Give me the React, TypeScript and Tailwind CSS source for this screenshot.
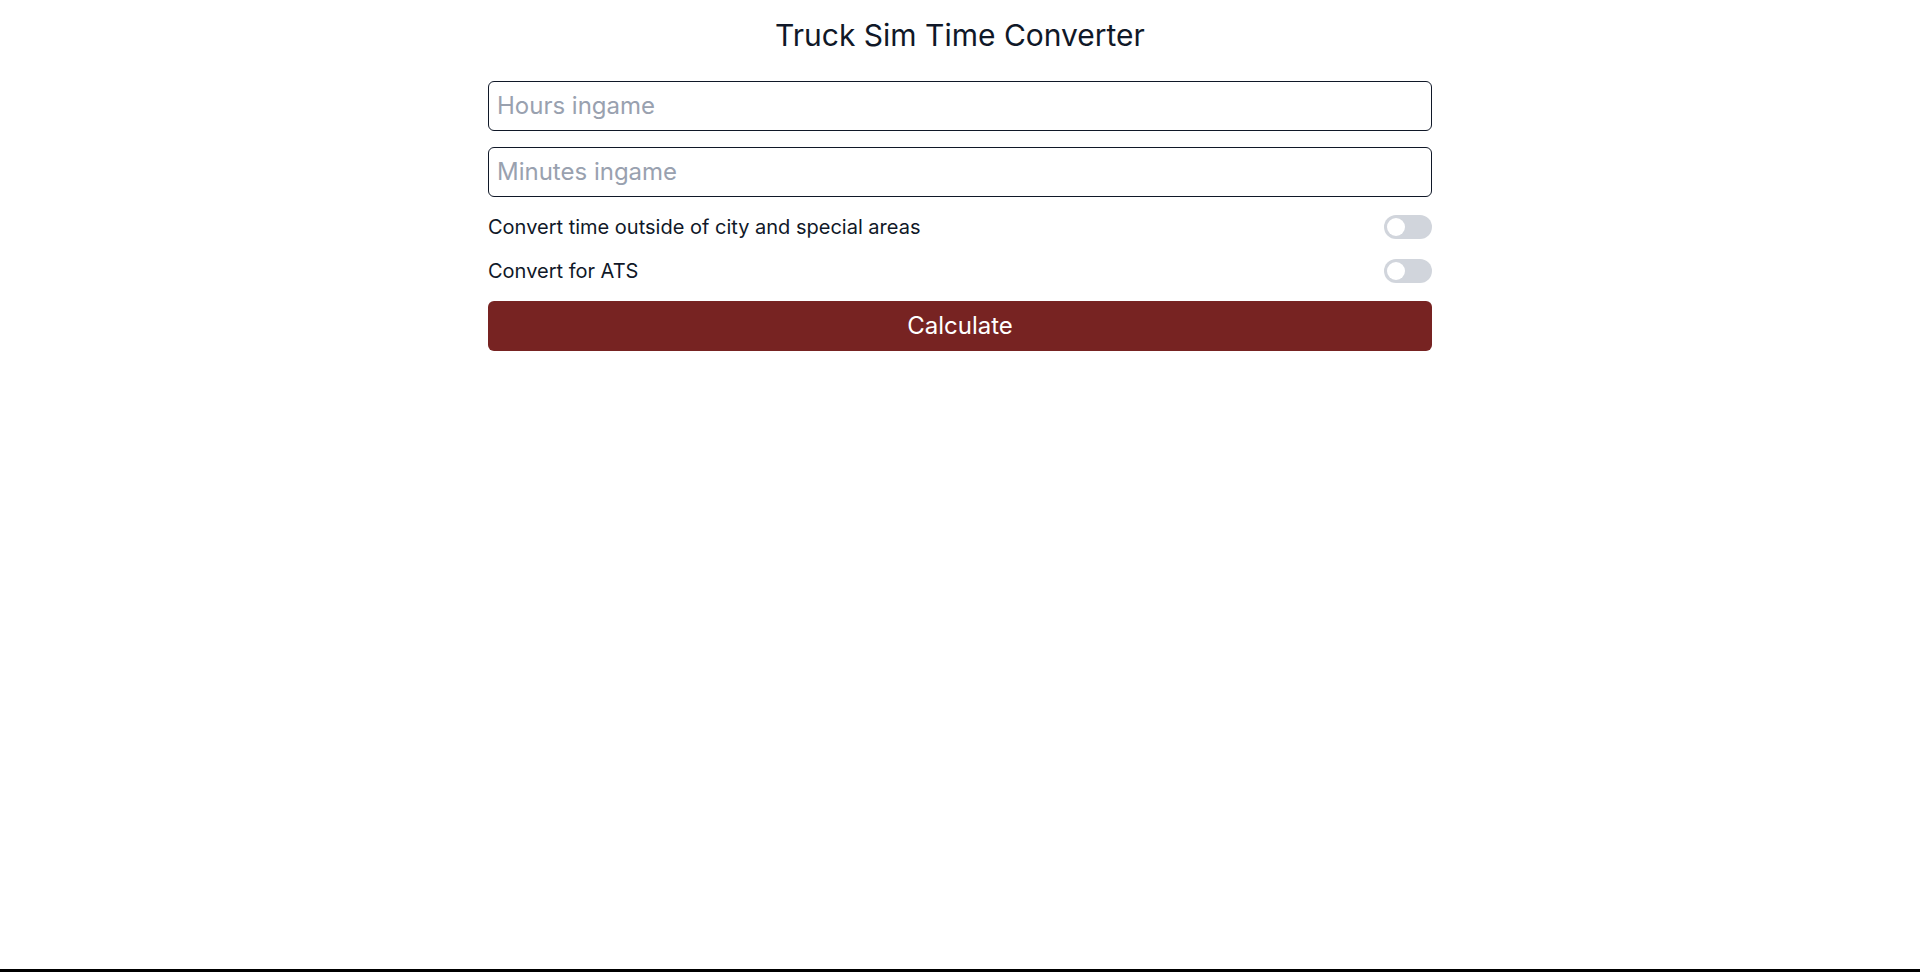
import React, { useState } from 'react';

const Toggle: React.FC<{ on: boolean; onChange: () => void }> = ({ on, onChange }) => (
  <button
    type="button"
    onClick={onChange}
    className={`relative w-12 h-6 rounded-full transition-colors ${on ? 'bg-[#772322]' : 'bg-gray-300'}`}
  >
    <span
      className={`absolute top-[3px] size-[18px] rounded-full bg-white transition-all ${on ? 'left-[27px]' : 'left-[3px]'}`}
    ></span>
  </button>
);

export default function App() {
  const [hours, setHours] = useState('');
  const [minutes, setMinutes] = useState('');
  const [outside, setOutside] = useState(false);
  const [ats, setAts] = useState(false);

  return (
    <div className="h-[972px] flex flex-col bg-white text-gray-900 font-['Inter',sans-serif]">
      <main className="flex-1">
        <h1 className="pt-[17px] mb-7 text-3xl text-center">Truck Sim Time Converter</h1>
        <div className="w-[944px] mx-auto flex flex-col gap-4">
          <input
            value={hours}
            onChange={(e) => setHours(e.target.value)}
            placeholder="Hours ingame"
            className="w-full border border-gray-900 rounded-md px-2 py-2 text-2xl leading-8 placeholder:text-gray-400 outline-none"
          />
          <input
            value={minutes}
            onChange={(e) => setMinutes(e.target.value)}
            placeholder="Minutes ingame"
            className="w-full border border-gray-900 rounded-md px-2 py-2 text-2xl leading-8 placeholder:text-gray-400 outline-none"
          />
          <div className="flex items-center justify-between h-7">
            <span className="text-xl">Convert time outside of city and special areas</span>
            <Toggle on={outside} onChange={() => setOutside(!outside)} />
          </div>
          <div className="flex items-center justify-between h-7">
            <span className="text-xl">Convert for ATS</span>
            <Toggle on={ats} onChange={() => setAts(!ats)} />
          </div>
          <button className="w-full bg-[#772322] text-white text-2xl leading-8 py-[9px] rounded-md">
            Calculate
          </button>
        </div>
      </main>
      <div className="h-[3px] bg-black"></div>
    </div>
  );
}
